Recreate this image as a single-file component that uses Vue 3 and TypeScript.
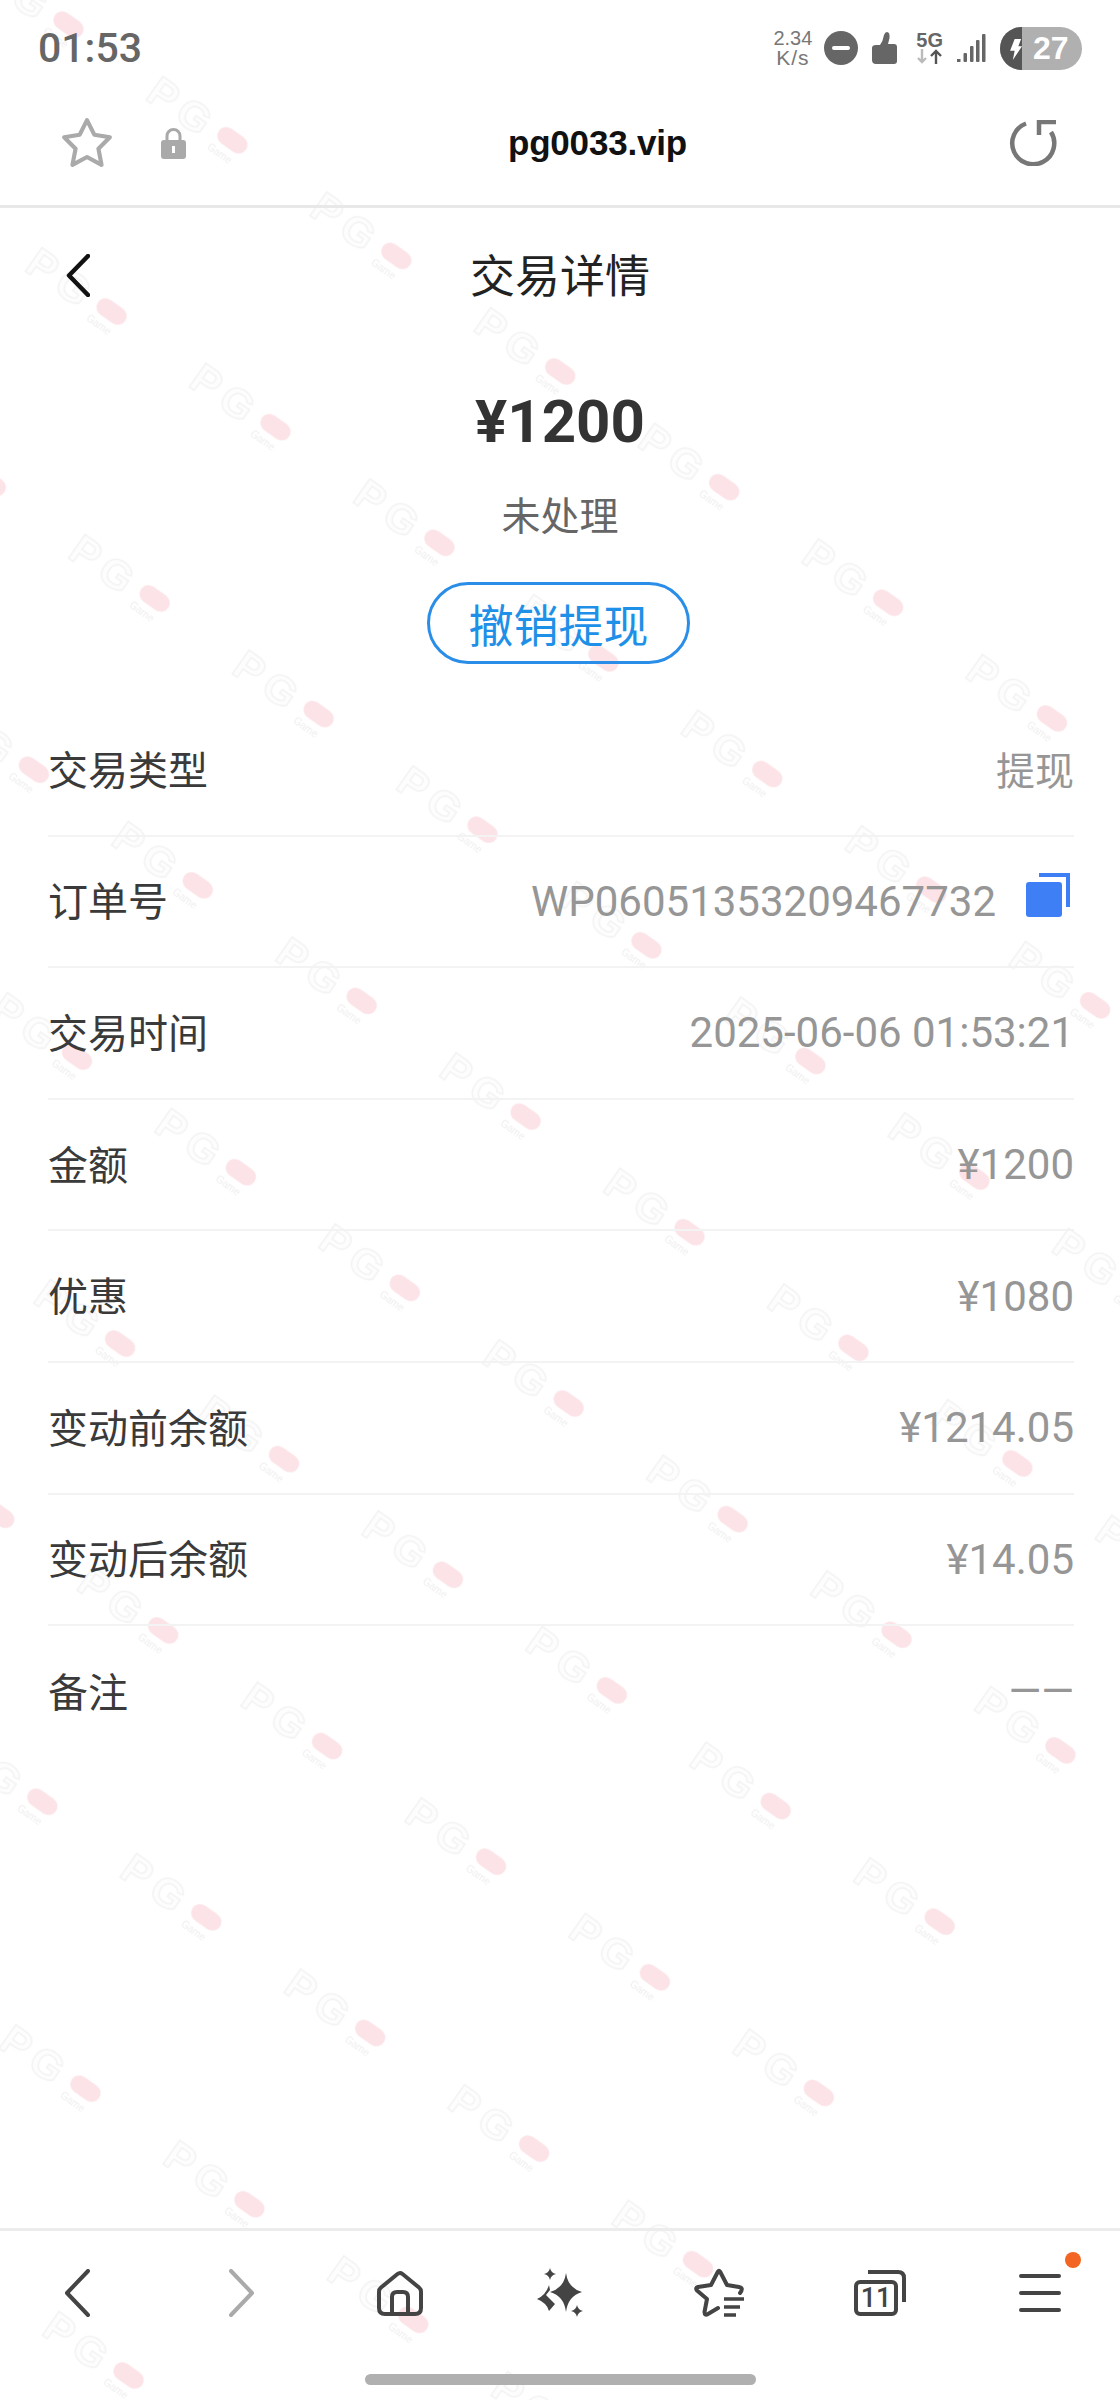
<script setup lang="ts">
interface DetailRow {
  label: string;
  value: string;
  copy?: boolean;
  cjk?: boolean;
}

const rows: DetailRow[] = [
  { label: '交易类型', value: '提现', cjk: true },
  { label: '订单号', value: 'WP06051353209467732', copy: true },
  { label: '交易时间', value: '2025-06-06 01:53:21' },
  { label: '金额', value: '¥1200' },
  { label: '优惠', value: '¥1080' },
  { label: '变动前余额', value: '¥1214.05' },
  { label: '变动后余额', value: '¥14.05' },
  { label: '备注', value: '——' },
];
</script>

<template>
  <div class="screen">
    <!-- repeated brand mark behind everything, laid on a tilted sheet -->
    <svg class="watermark" width="1120" height="2400">
      <defs>
        <pattern id="brand-tile" patternUnits="userSpaceOnUse" width="200.6" height="209.6">
          <text x="24" y="117" class="wm-letters">PG</text>
          <text x="104" y="122" class="wm-small">Game</text>
          <rect x="104" y="91" width="33" height="18" rx="9" fill="#fce3e7" />
        </pattern>
      </defs>
      <rect
        transform="translate(232 140) rotate(35.2) translate(-120 -100)"
        x="-401.2"
        y="0"
        width="2206.6"
        height="2515.2"
        fill="url(#brand-tile)"
      />
    </svg>

    <div class="content">
      <div class="status-bar">
        <span class="clock">01:53</span>
        <div class="status-icons">
          <div class="speed">
            <span>2.34</span>
            <span class="speed-unit">K/s</span>
          </div>
          <svg class="dnd" width="34" height="34" viewBox="0 0 34 34">
            <circle cx="17" cy="17" r="17" fill="#666" />
            <rect x="8" y="15" width="18" height="4" rx="2" fill="#fff" />
          </svg>
          <svg class="thumb" width="25" height="32" viewBox="0 0 25 32">
            <path
              d="M0 16Q0 13 4 13L8 13Q11 9 12 3Q13 0 15 0Q18 0 17.5 6L16 12H22Q25 12 25 15V29Q25 32 22 32H4Q0 32 0 28Z"
              fill="#666"
            />
          </svg>
          <div class="network">
            <span class="network-label">5G</span>
            <svg width="26" height="15" viewBox="0 0 26 15" fill="none" stroke-width="2.4">
              <path d="M5 0V13M1 9L5 13L9 9" stroke="#bbb" />
              <path d="M19 15V2M14 7L19 2L24 7" stroke="#555" />
            </svg>
          </div>
          <svg width="29" height="28" viewBox="0 0 29 28" fill="#666">
            <rect x="0" y="25" width="3.5" height="3" />
            <rect x="6.5" y="19" width="3.5" height="9" rx="1" />
            <rect x="13" y="12" width="3.5" height="16" rx="1" />
            <rect x="19" y="6" width="3.5" height="22" rx="1" />
            <rect x="25" y="0" width="3.5" height="28" rx="1" />
          </svg>
          <div class="battery">
            <div class="battery-charge">
              <svg width="24" height="43" viewBox="0 0 24 43">
                <path d="M16 11H23L20 19H24L14 34L16 24H11Z" fill="#fff" />
              </svg>
            </div>
            <span class="battery-level">27</span>
          </div>
        </div>
      </div>

      <div class="url-bar">
        <div class="url-left">
          <svg width="54" height="52" viewBox="0 0 52 50" fill="none">
            <path
              d="M26 3L33 17L48 19.5L37 30.5L40 46L26 38.5L12 46L15 30.5L4 19.5L19 17Z"
              stroke="#aaa"
              stroke-width="4"
              stroke-linejoin="round"
            />
          </svg>
          <svg width="25" height="32" viewBox="0 0 25 32">
            <path d="M6 14V9a6.5 6.5 0 0 1 13 0V14" fill="none" stroke="#a9a9a9" stroke-width="3" />
            <rect x="0" y="13" width="25" height="19" rx="3" fill="#a9a9a9" />
            <rect x="11" y="19" width="3" height="7" fill="#fff" />
          </svg>
        </div>
        <span class="url">pg0033.vip</span>
        <div class="url-right">
          <svg width="48" height="46" viewBox="0 0 48 46" fill="none" stroke="#777" stroke-width="4.5">
            <path d="M17 3.5A21 21 0 1 0 42 12" />
            <path d="M30 15V2H47" />
          </svg>
        </div>
      </div>

      <div class="nav">
        <div class="nav-back">
          <svg width="24" height="43" viewBox="0 0 24 43" fill="none">
            <path d="M22 2L3 21.5L22 41" stroke="#111" stroke-width="4.5" stroke-linecap="round" stroke-linejoin="round" />
          </svg>
        </div>
        <span class="nav-title">交易详情</span>
      </div>

      <div class="summary">
        <div class="amount">¥1200</div>
        <div class="state">未处理</div>
        <button class="cancel" type="button">撤销提现</button>
      </div>

      <div class="details">
        <div v-for="row in rows" :key="row.label" class="row">
          <span class="row-label">{{ row.label }}</span>
          <span class="row-value" :class="{ 'row-value-cjk': row.cjk }">{{ row.value }}</span>
          <svg v-if="row.copy" class="copy" width="44" height="44" viewBox="0 0 44 44">
            <path d="M13 2H42V34" fill="none" stroke="#3f7ff5" stroke-width="4" />
            <rect x="0" y="9" width="36" height="35" rx="3" fill="#3f7ff5" />
          </svg>
        </div>
      </div>

      <div class="spacer"></div>

      <div class="toolbar">
        <div class="tool tool-back">
          <svg width="26" height="48" viewBox="0 0 26 48" fill="none">
            <path d="M24 2L3 24L24 46" stroke="#444" stroke-width="4" stroke-linecap="round" stroke-linejoin="round" />
          </svg>
        </div>
        <div class="tool tool-forward">
          <svg width="26" height="48" viewBox="0 0 26 48" fill="none">
            <path d="M2 2L23 24L2 46" stroke="#aaa" stroke-width="4" stroke-linecap="round" stroke-linejoin="round" />
          </svg>
        </div>
        <div class="tool">
          <svg width="46" height="46" viewBox="0 0 46 46" fill="none" stroke="#444" stroke-width="4" stroke-linejoin="round">
            <path d="M4 17.5L20.5 4Q23 2 25.5 4L42 17.5Q44 19 44 22V38Q44 44 38 44H8Q2 44 2 38V22Q2 19 4 17.5Z" />
            <path d="M15 44V27Q15 22 20 22H26Q31 22 31 27V44" />
          </svg>
        </div>
        <div class="tool">
          <svg width="46" height="50" viewBox="0 0 46 50" fill="#444">
            <path d="M29 5Q31 20 45 24Q31 28 29 44Q27 28 13 24Q27 20 29 5Z" />
            <path d="M13 0Q14 5 19 6Q14 7 13 12Q12 7 7 6Q12 5 13 0Z" />
            <path d="M40 37Q41 42 46 43Q41 44 40 49Q39 44 34 43Q39 42 40 37Z" />
            <path d="M12 17L13 22L9 27L18 36L12 43Q10 35 0 31Q9 27 12 17Z" />
          </svg>
        </div>
        <div class="tool">
          <svg width="52" height="50" viewBox="0 0 52 50" fill="none" stroke="#444" stroke-linecap="round" stroke-linejoin="round">
            <path
              d="M46 25C49 21 48 19.5 45 19L33 17L26 3.5Q25 2 24 3.5L17 17L4 19Q1 20 3 22.5L13 31L10.5 44Q10.5 48 14 46L24 40"
              stroke-width="4"
            />
            <path d="M30 31H50M30 39H46M30 47H42" stroke-width="3.5" stroke-linecap="butt" />
          </svg>
        </div>
        <div class="tool">
          <svg width="52" height="46" viewBox="0 0 52 46" fill="none" stroke="#444" stroke-width="4">
            <rect x="2" y="12" width="40" height="32" rx="4" />
            <path d="M14 2H44Q50 2 50 8V32" />
            <text x="22" y="37" class="tabs-count">11</text>
          </svg>
        </div>
        <div class="tool">
          <svg width="42" height="38" viewBox="0 0 42 38" fill="none">
            <path d="M2 2H40M2 19H40M2 36H40" stroke="#444" stroke-width="4" stroke-linecap="round" />
          </svg>
          <span class="menu-dot"></span>
        </div>
      </div>
      <div class="home-indicator"></div>
    </div>
  </div>
</template>

<style scoped>
.screen {
  position: relative;
  width: 1120px;
  height: 2400px;
  overflow: hidden;
  background: #fff;
  font-family: Roboto, "Noto Sans CJK SC", sans-serif;
}

.watermark {
  position: absolute;
  inset: 0;
}

.wm-letters {
  font-family: "Liberation Sans", sans-serif;
  font-size: 42px;
  font-weight: 700;
  letter-spacing: 7px;
  fill: #fdfdfd;
  stroke: #f3f3f3;
  stroke-width: 1.5;
}

.wm-small {
  font-family: "Liberation Sans", sans-serif;
  font-size: 10px;
  fill: #eeeeee;
}

.content {
  position: relative;
  display: flex;
  flex-direction: column;
  height: 100%;
}

.status-bar {
  display: flex;
  justify-content: space-between;
  align-items: center;
  height: 96px;
  padding: 0 38px;
}

.clock {
  font-size: 41px;
  font-weight: 500;
  color: #666;
}

.status-icons {
  display: flex;
  align-items: center;
  gap: 14px;
}

.speed {
  display: flex;
  flex-direction: column;
  align-items: center;
  font-family: "Liberation Sans", sans-serif;
  font-size: 20px;
  line-height: 20px;
  color: #777;
}

.speed-unit {
  font-size: 21px;
  letter-spacing: 1px;
}

.dnd {
  margin-left: -2px;
}

.network {
  display: flex;
  flex-direction: column;
  align-items: center;
  margin-left: 5px;
}

.network-label {
  font-family: "Liberation Sans", sans-serif;
  font-size: 20px;
  line-height: 17px;
  font-weight: 700;
  color: #666;
}

.battery {
  display: flex;
  align-items: center;
  width: 82px;
  height: 43px;
  border-radius: 22px;
  overflow: hidden;
  background: #b0b0b0;
}

.battery-charge {
  display: flex;
  flex: none;
  width: 22px;
  height: 100%;
  overflow: hidden;
  background: #555;
}

.battery-level {
  margin-left: 11px;
  font-family: "Liberation Sans", sans-serif;
  font-size: 32px;
  font-weight: 700;
  color: #fff;
}

.url-bar {
  display: grid;
  grid-template-columns: 508px auto 1fr;
  align-items: center;
  height: 112px;
  padding-bottom: 15px;
  box-sizing: border-box;
  border-bottom: 3px solid #e8e8e8;
}

.url-left {
  display: flex;
  align-items: center;
  gap: 47px;
  padding-left: 60px;
}

.url {
  font-family: "Liberation Sans", sans-serif;
  font-size: 35px;
  font-weight: 700;
  letter-spacing: -0.2px;
  color: #111;
}

.url-right {
  display: flex;
  justify-content: flex-end;
  padding-right: 63px;
}

.nav {
  position: relative;
  display: flex;
  align-items: center;
  justify-content: center;
  height: 134px;
}

.nav-back {
  position: absolute;
  left: 66px;
  display: flex;
}

.nav-title {
  margin-top: -3px;
  font-size: 45px;
  color: #222;
}

.summary {
  display: flex;
  flex-direction: column;
  align-items: center;
  padding-top: 50px;
}

.amount {
  font-size: 60px;
  line-height: 60px;
  font-weight: 700;
  color: #333;
}

.state {
  margin-top: 40px;
  font-size: 39px;
  line-height: 50px;
  color: #666;
}

.cancel {
  width: 263px;
  height: 82px;
  margin: 40px 3px 0 0;
  padding: 0;
  border: 3px solid #2a8ee8;
  border-radius: 41px;
  background: transparent;
  font-family: inherit;
  font-size: 45px;
  color: #1e90e8;
}

.details {
  margin: 41px 46px 0 48px;
}

.row {
  display: flex;
  align-items: center;
  height: 131.6px;
  box-sizing: border-box;
  border-bottom: 2px solid #f3f3f3;
}

.row:last-child {
  border-bottom: none;
}

.row-label {
  flex: 1;
  margin-top: -4px;
  font-size: 40px;
  color: #3a3a3a;
}

.row-value {
  font-size: 42px;
  color: #969696;
}

.row-value-cjk {
  margin-top: -4px;
  font-size: 39px;
}

.copy {
  margin: -12px 4px 0 30px;
}

.spacer {
  flex: 1;
}

.toolbar {
  display: grid;
  grid-template-columns: repeat(7, 160px);
  height: 124px;
  border-top: 3px solid #ececec;
}

.tool {
  position: relative;
  display: flex;
  align-items: center;
  justify-content: center;
}

.tool-back {
  padding-right: 6px;
}

.tool-forward {
  padding-left: 4px;
}

.tabs-count {
  font-family: Roboto, sans-serif;
  font-size: 27px;
  font-weight: 500;
  fill: #444;
  stroke: none;
  text-anchor: middle;
}

.menu-dot {
  position: absolute;
  left: 105px;
  top: 21px;
  width: 16px;
  height: 16px;
  border-radius: 50%;
  background: #f26522;
}

.home-indicator {
  align-self: center;
  width: 391px;
  height: 11px;
  margin: 19px 0 15px;
  border-radius: 6px;
  background: #b0b0b0;
}
</style>
